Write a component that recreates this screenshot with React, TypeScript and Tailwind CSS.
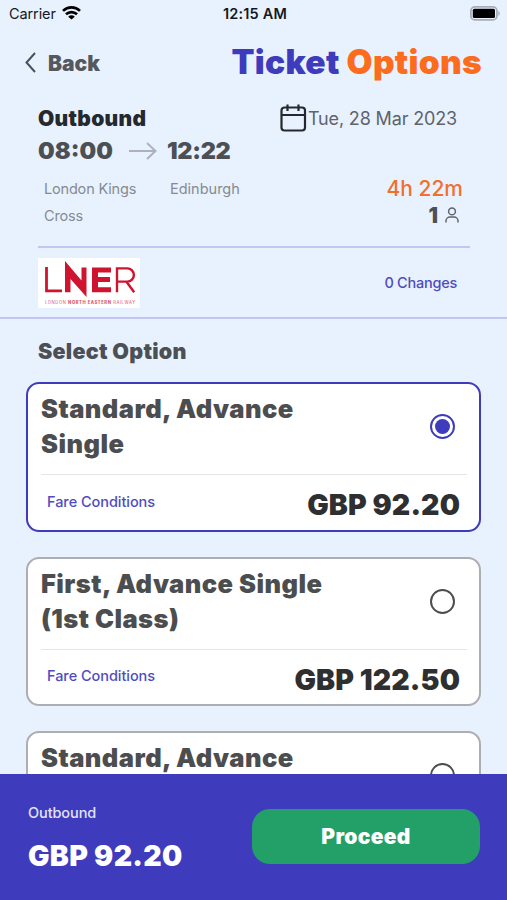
import { useState } from 'react'
import { clsx } from 'clsx'

interface Fare {
  id: number
  lines: string[]
  price?: string
}

const FARES: Fare[] = [
  { id: 1, lines: ['Standard, Advance', 'Single'], price: 'GBP 92.20' },
  { id: 2, lines: ['First, Advance Single', '(1st Class)'], price: 'GBP 122.50' },
  { id: 3, lines: ['Standard, Advance'] },
]

function StatusBar() {
  return (
    <div className="grid h-7 shrink-0 grid-cols-3 items-center pl-[9px] pr-[6px] text-[14.5px] text-[#15181c]">
      <div className="flex items-center gap-[6px]">
        <span className="tracking-[-0.1px]">Carrier</span>
        <svg width="19" height="14" viewBox="0 0 19 14" fill="none" stroke="#000" strokeWidth="2.7" className="-mt-[2px]">
          <path d="M1 4.9a12.2 12.2 0 0 1 17 0" />
          <path d="M4 8.3a7.9 7.9 0 0 1 11 0" />
          <path d="M9.5 13.6 6.2 10.7a4.6 4.6 0 0 1 6.6 0Z" fill="#000" stroke="none" />
        </svg>
      </div>
      <span className="text-center text-[14.5px] font-semibold tracking-[0.2px]">12:15 AM</span>
      <svg className="-mt-[2px] justify-self-end" width="31" height="15" viewBox="0 0 31 15">
        <rect x="0.9" y="0.9" width="26" height="13" rx="4" fill="none" stroke="#a9adb6" strokeWidth="1.8" />
        <rect x="2.8" y="2.8" width="22.2" height="9.2" rx="1.5" fill="#000" />
        <path d="M28.3 4.8v5.2a3 3 0 0 0 0-5.2Z" fill="#a9adb6" />
      </svg>
    </div>
  )
}

function LnerLogo() {
  return (
    <svg width="102" height="50" viewBox="0 0 102 50" className="bg-white" fontFamily="Inter, sans-serif" fill="#cf1430">
      <path d="M8.5 9v23.8H24" fill="none" stroke="#cf1430" strokeWidth="2.8" />
      <path d="M27 3 43.500 22.500V9.500h5V39L32.500 21v13.200H27Z" />
      <path d="M54 9.500h19v5H60v4.400h12v5H60v5.400h13v5H54Z" />
      <path d="M79 34.300V10.400h10.300a6.600 6.600 0 0 1 0 13.200H79M88.500 23.800l7.700 10.500" fill="none" stroke="#cf1430" strokeWidth="2.4" />
      <text x="7" y="45.5" fontSize="4.2" textLength="90" opacity="0.75">
        LONDON <tspan fontWeight="800">NORTH EASTERN</tspan> RAILWAY
      </text>
    </svg>
  )
}

function FareCard({ fare, selected, onSelect }: { fare: Fare; selected: boolean; onSelect: () => void }) {
  return (
    <div className={clsx('h-[149.5px] shrink-0 rounded-[13px] border-[2.5px] bg-white pl-[13px] pr-[12px]', selected ? 'border-[#3f3bbd]' : 'border-[#acaeb1]')}>
      <div className="flex h-[91px] justify-between border-b border-[#e6e6e8] pr-[12px] pt-[7px]">
        <h3 className="text-[25.5px] font-black leading-[35px] tracking-[0.45px] text-[#4c4d4f]">
          {fare.lines.map(l => <span key={l} className="block whitespace-nowrap">{l}</span>)}
        </h3>
        <button onClick={onSelect} aria-label="Select fare"
          className={clsx('mt-[23px] flex size-[25px] items-center justify-center rounded-full border-2', selected ? 'border-[#3f3bbd]' : 'border-[#4c4d4f]')}>
          {selected && <span className="size-[15px] rounded-full bg-[#3f3bbd]" />}
        </button>
      </div>
      {fare.price && (
        <div className="flex items-center justify-between pl-[6px] pr-[7px] pt-[9px]">
          <span className="pb-[7px] text-[14.5px] font-medium tracking-[-0.05px] text-[#504bc0]">Fare Conditions</span>
          <span className="text-[28.5px] font-black leading-[42px] tracking-[0.1px] text-[#2e2f31]">{fare.price}</span>
        </div>
      )}
    </div>
  )
}

export default function App() {
  const [selected, setSelected] = useState(1)

  return (
    <div className="flex h-[900px] w-[507px] flex-col overflow-hidden bg-[#e8f2ff] font-[Inter,sans-serif]">
      <StatusBar />

      {/* Title bar */}
      <header className="flex h-[68px] shrink-0 items-center justify-between pl-[24px] pr-[25px]">
        <button className="flex items-center gap-[11px] pt-[4px] text-[21px] font-black text-[#55585d]">
          <svg width="13" height="21" viewBox="0 0 13 21" fill="none" stroke="#4c5055" strokeWidth="2" className="-mt-[4px]">
            <path d="M11 1 2.5 10.5 11 20" />
          </svg>
          Back
        </button>
        <h1 className="text-[33.5px] font-black tracking-[0.3px] text-[#3f3bbd]">
          Ticket <span className="text-[#fd6b1c]">Options</span>
        </h1>
      </header>

      {/* Journey summary */}
      <section className="flex h-[223px] shrink-0 flex-col border-b-2 border-[#c3c6f3] pl-[38px] pr-[37px]">
        <div className="flex h-[152px] shrink-0 justify-between border-b-2 border-[#c3c6f3] pt-[7px]">
          <div>
            <div className="text-[21px] font-black leading-[32px] tracking-[0.3px] text-[#25282c]">Outbound</div>
            <div className="-mt-px flex h-[33px] items-center text-[23.5px] font-black text-[#4c5055]">
              <span className="w-[91px]">08:00</span>
              <svg width="28" height="18" viewBox="0 0 28 18" fill="none" stroke="#aeb1bb" strokeWidth="2">
                <path d="M0 9h26M18 1l8.5 8L18 17" />
              </svg>
              <span className="ml-[10px] tracking-[-0.3px]">12:22</span>
            </div>
            <div className="mt-[8px] flex pl-[6px] text-[14.5px] leading-[27px] tracking-[-0.18px] text-[#858a93]">
              <span className="w-[126px]">London Kings<br />Cross</span>
              <span className="tracking-[0px]">Edinburgh</span>
            </div>
          </div>
          <div className="flex flex-col items-end pr-[7px]">
            <div className="flex h-[30px] items-center pr-[6px] text-[18px] tracking-[-0.15px] text-[#5f636b]">
              <svg width="28" height="30" viewBox="0 0 28 30" fill="none" stroke="#25282c" strokeWidth="2.2" className="-mt-px shrink-0">
                <rect x="1.5" y="4.5" width="23.5" height="23" rx="3" />
                <path d="M1.5 12h23.5M7.5 1.5v6.5M18.5 1.5v6.5" />
              </svg>
              Tue, 28 Mar 2023
            </div>
            <div className="mt-[42px] text-[21px] font-medium leading-[28px] text-[#f26f2c]">4h 22m</div>
            <div className="flex items-center gap-[7px] pr-[4px] text-[21px] font-black leading-[26px] text-[#4c5055]">
              1
              <svg width="14" height="16" viewBox="0 0 14 16" fill="none" stroke="#5f636b" strokeWidth="1.5" className="-mt-[3px]">
                <circle cx="7" cy="4.4" r="3.4" />
                <path d="M1 15.5v-1.5a4 4 0 0 1 4-4h4a4 4 0 0 1 4 4v1.5" />
              </svg>
            </div>
          </div>
        </div>
        <div className="flex flex-1 items-center justify-between pr-[13px]">
          <LnerLogo />
          <span className="text-[14.5px] font-medium tracking-[-0.25px] text-[#504bc0]">0 Changes</span>
        </div>
      </section>

      {/* Fares */}
      <main className="flex min-h-0 flex-1 flex-col overflow-hidden px-[26px]">
        <h2 className="h-[63px] shrink-0 pl-[12px] pt-[16px] text-[21.5px] font-black leading-[32px] tracking-[0.25px] text-[#4c5055]">Select Option</h2>
        <div className="flex flex-col gap-[25px]">
          {FARES.map(f => (
            <FareCard key={f.id} fare={f} selected={selected === f.id} onSelect={() => setSelected(f.id)} />
          ))}
        </div>
      </main>

      <footer className="flex h-[126px] shrink-0 justify-between bg-[#3f3bbd] pl-[28px] pr-[27px] text-white">
        <div className="pt-[29px]">
          <div className="text-[14.5px] font-medium leading-[20px] tracking-[-0.1px] text-[#e3e3fb]">Outbound</div>
          <div className="mt-[13px] text-[28.5px] font-black leading-[40px] tracking-[0.3px]">GBP 92.20</div>
        </div>
        <button className="mt-[35px] h-[55px] w-[228px] rounded-[18px] bg-[#23a067] text-[21px] font-black tracking-[0.35px]">Proceed</button>
      </footer>
    </div>
  )
}
